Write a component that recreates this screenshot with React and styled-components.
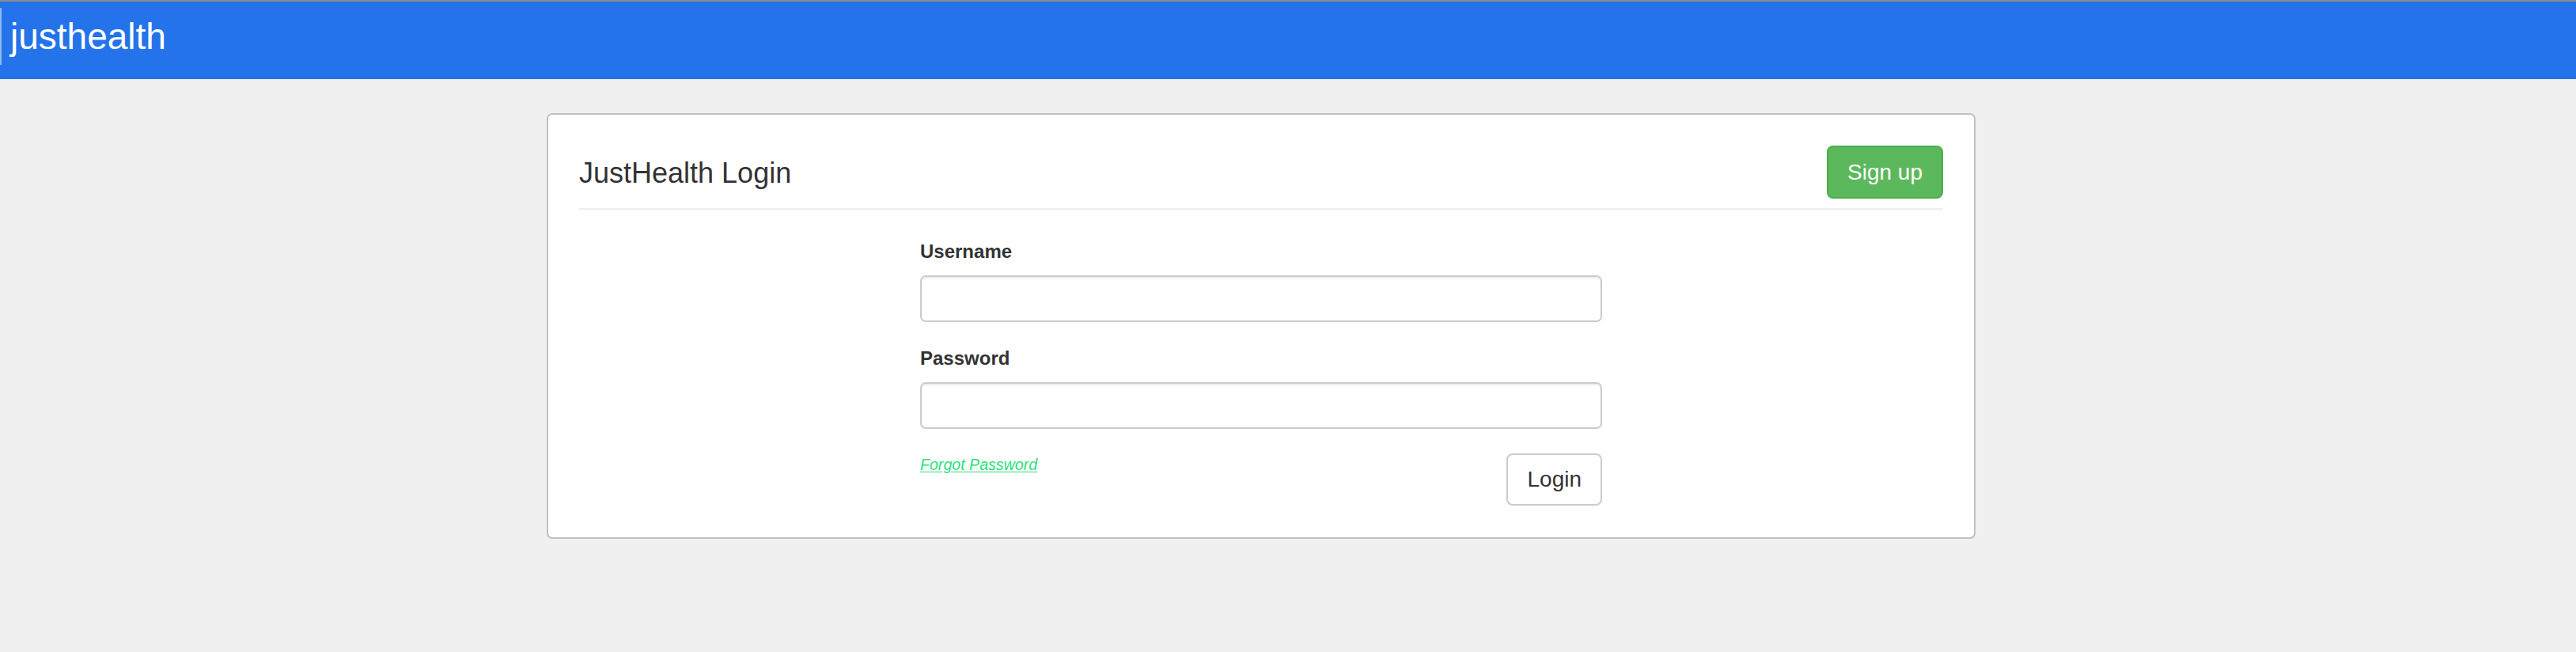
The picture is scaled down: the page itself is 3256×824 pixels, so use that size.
import React from 'react'
import styled, { createGlobalStyle } from 'styled-components'

const GlobalStyle = createGlobalStyle`
  html, body {
    margin: 0;
    padding: 0;
    background: #f0f0f0;
    font-family: "Liberation Sans", Arial, Helvetica, sans-serif;
    color: #333;
  }
  * { box-sizing: border-box; }
`

const Page = styled.div`
  width: 3256px;
  min-height: 824px;
  background: #f0f0f0;
`

const Navbar = styled.header`
  height: 100px;
  background: #2473ea;
  border-top: 2px solid #8d8d8d;
  display: flex;
  align-items: flex-start;
`

const Brand = styled.a`
  margin-top: 8px;
  height: 72px;
  line-height: 72px;
  padding-left: 11px;
  border-left: 2px solid rgba(255, 255, 255, 0.5);
  font-size: 46px;
  color: #fff;
  text-decoration: none;
`

const Main = styled.main`
  padding: 43px 68px 0 0;
  display: flex;
  justify-content: center;
`

const Card = styled.section`
  width: 1806px;
  background: #fff;
  border: 2px solid #c0c0c0;
  border-radius: 7px;
  padding: 39px 39px 40px;
`

const CardHeader = styled.div`
  display: flex;
  align-items: center;
  justify-content: space-between;
  padding-bottom: 12px;
  border-bottom: 2px solid #eeeeee;
`

const Title = styled.h2`
  margin: 3px 0 0;
  font-size: 36px;
  font-weight: normal;
  line-height: 44px;
  color: #333;
`

const Button = styled.button`
  font-family: inherit;
  font-size: 28px;
  line-height: ${p => (p.$primary ? '39px' : '40px')};
  padding: ${p => (p.$primary ? '12px 24px' : '11px 24px')};
  border: 2px solid ${p => (p.$primary ? '#4cae4c' : '#cccccc')};
  border-radius: 8px;
  background: ${p => (p.$primary ? '#5cb85c' : '#fff')};
  color: ${p => (p.$primary ? '#fff' : '#333')};
  cursor: pointer;
`

const Form = styled.form`
  width: 862px;
  margin: 36px auto 0;
  display: flex;
  flex-direction: column;
`

const Group = styled.div`
  display: flex;
  flex-direction: column;
  margin-bottom: ${p => p.$gap || '0'};
`

const Label = styled.label`
  font-size: 24px;
  font-weight: bold;
  line-height: 34px;
  margin-bottom: 13px;
  color: #333;
`

const Input = styled.input`
  height: 59px;
  width: 100%;
  border: 2px solid #cccccc;
  border-radius: 7px;
  box-shadow: inset 0 2px 2px rgba(0, 0, 0, 0.075);
  font-size: 24px;
  padding: 0 20px;
  font-family: inherit;
`

const Actions = styled.div`
  display: flex;
  justify-content: space-between;
  align-items: flex-start;
  margin-top: 31px;
`

const Forgot = styled.a`
  font-size: 19.6px;
  line-height: 28px;
  font-style: italic;
  color: #27e27b;
  text-decoration: underline;
  text-underline-offset: 2px;
`

export default function App() {
  return (
    <Page>
      <GlobalStyle />
      <Navbar>
        <Brand href="#">justhealth</Brand>
      </Navbar>
      <Main>
        <Card>
          <CardHeader>
            <Title>JustHealth Login</Title>
            <Button $primary type="button">Sign up</Button>
          </CardHeader>
          <Form onSubmit={e => e.preventDefault()}>
            <Group $gap="29px">
              <Label htmlFor="username">Username</Label>
              <Input id="username" type="text" />
            </Group>
            <Group>
              <Label htmlFor="password">Password</Label>
              <Input id="password" type="password" />
            </Group>
            <Actions>
              <Forgot href="#">Forgot Password</Forgot>
              <Button type="submit">Login</Button>
            </Actions>
          </Form>
        </Card>
      </Main>
    </Page>
  )
}
